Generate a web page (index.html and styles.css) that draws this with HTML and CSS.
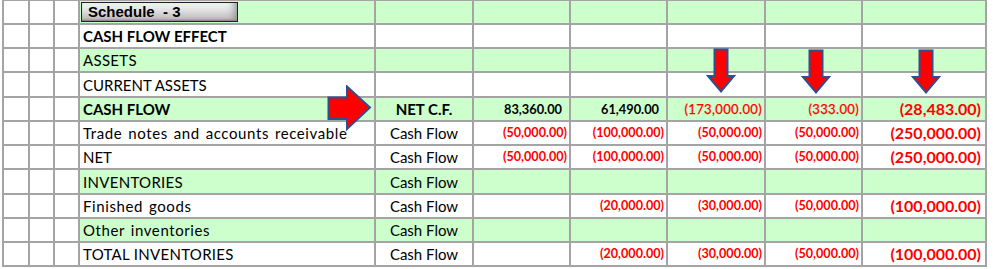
FILE: index.html
```html
<!DOCTYPE html>
<html>
<head>
<meta charset="utf-8">
<link rel="stylesheet" href="styles.css">
</head>
<body>
<div class="sheet">
  <div class="grid">
    <div class="row green">
      <div class="c"></div><div class="c"></div><div class="c"></div>
      <div class="c lbl"><span class="btn">Schedule&nbsp; - 3</span></div>
      <div class="c"></div><div class="c"></div><div class="c"></div><div class="c"></div><div class="c"></div><div class="c"></div>
    </div>
    <div class="row">
      <div class="c"></div><div class="c"></div><div class="c"></div>
      <div class="c lbl b">CASH FLOW EFFECT</div>
      <div class="c"></div><div class="c"></div><div class="c"></div><div class="c"></div><div class="c"></div><div class="c"></div>
    </div>
    <div class="row green">
      <div class="c"></div><div class="c"></div><div class="c"></div>
      <div class="c lbl caps">ASSETS</div>
      <div class="c"></div><div class="c"></div><div class="c"></div><div class="c"></div><div class="c"></div><div class="c"></div>
    </div>
    <div class="row">
      <div class="c"></div><div class="c"></div><div class="c"></div>
      <div class="c lbl">CURRENT ASSETS</div>
      <div class="c"></div><div class="c"></div><div class="c"></div><div class="c"></div><div class="c"></div><div class="c"></div>
    </div>
    <div class="row green">
      <div class="c"></div><div class="c"></div><div class="c"></div>
      <div class="c lbl b">CASH FLOW</div>
      <div class="c mid b">NET C.F.</div>
      <div class="c num pos">83,360.00</div>
      <div class="c num pos">61,490.00</div>
      <div class="c num neg thin">(173,000.00)</div>
      <div class="c num neg thin">(333.00)</div>
      <div class="c num big">(28,483.00)</div>
    </div>
    <div class="row">
      <div class="c"></div><div class="c"></div><div class="c"></div>
      <div class="c lbl lower">Trade notes and accounts receivable</div>
      <div class="c mid">Cash Flow</div>
      <div class="c num neg">(50,000.00)</div>
      <div class="c num neg">(100,000.00)</div>
      <div class="c num neg">(50,000.00)</div>
      <div class="c num neg">(50,000.00)</div>
      <div class="c num big">(250,000.00)</div>
    </div>
    <div class="row">
      <div class="c"></div><div class="c"></div><div class="c"></div>
      <div class="c lbl">NET</div>
      <div class="c mid">Cash Flow</div>
      <div class="c num neg">(50,000.00)</div>
      <div class="c num neg">(100,000.00)</div>
      <div class="c num neg">(50,000.00)</div>
      <div class="c num neg">(50,000.00)</div>
      <div class="c num big">(250,000.00)</div>
    </div>
    <div class="row green">
      <div class="c"></div><div class="c"></div><div class="c"></div>
      <div class="c lbl caps">INVENTORIES</div>
      <div class="c mid">Cash Flow</div>
      <div class="c"></div><div class="c"></div><div class="c"></div><div class="c"></div><div class="c"></div>
    </div>
    <div class="row">
      <div class="c"></div><div class="c"></div><div class="c"></div>
      <div class="c lbl lower">Finished goods</div>
      <div class="c mid">Cash Flow</div>
      <div class="c"></div>
      <div class="c num neg">(20,000.00)</div>
      <div class="c num neg">(30,000.00)</div>
      <div class="c num neg">(50,000.00)</div>
      <div class="c num big">(100,000.00)</div>
    </div>
    <div class="row green">
      <div class="c"></div><div class="c"></div><div class="c"></div>
      <div class="c lbl lower">Other inventories</div>
      <div class="c mid">Cash Flow</div>
      <div class="c"></div><div class="c"></div><div class="c"></div><div class="c"></div><div class="c"></div>
    </div>
    <div class="row">
      <div class="c"></div><div class="c"></div><div class="c"></div>
      <div class="c lbl caps">TOTAL INVENTORIES</div>
      <div class="c mid">Cash Flow</div>
      <div class="c"></div>
      <div class="c num neg">(20,000.00)</div>
      <div class="c num neg">(30,000.00)</div>
      <div class="c num neg">(50,000.00)</div>
      <div class="c num big">(100,000.00)</div>
    </div>
  </div>

  <svg class="arrow arrow-right" width="46" height="46" viewBox="0 0 46 46">
    <path d="M1.5 12.5 H20 V1.5 L43 22.5 L20 44 V34 H1.5 Z" fill="#ff0000" stroke="#2f4f8f" stroke-width="2" stroke-linejoin="miter"/>
  </svg>
  <svg class="arrow arrow-d1" width="30" height="46" viewBox="0 0 30 46">
    <path d="M8.5 1.5 H21.5 V28 H28 L15 43.5 L2 28 H8.5 Z" fill="#ff0000" stroke="#2f4f8f" stroke-width="2"/>
  </svg>
  <svg class="arrow arrow-d2" width="30" height="46" viewBox="0 0 30 46">
    <path d="M8.5 1.5 H21.5 V28 H28 L15 43.5 L2 28 H8.5 Z" fill="#ff0000" stroke="#2f4f8f" stroke-width="2"/>
  </svg>
  <svg class="arrow arrow-d3" width="30" height="46" viewBox="0 0 30 46">
    <path d="M8.5 1.5 H21.5 V28 H28 L15 43.5 L2 28 H8.5 Z" fill="#ff0000" stroke="#2f4f8f" stroke-width="2"/>
  </svg>
</div>
</body>
</html>
```

FILE: styles.css
```css
html, body {
  margin: 0;
  padding: 0;
  background: #ffffff;
}

.sheet {
  position: relative;
  width: 993px;
  height: 269px;
  overflow: hidden;
}

.grid {
  display: grid;
  grid-template-columns: 24px 23px 23px 294px 96px 95px 95px 96px 95px 122px;
  grid-template-rows: 22px 22px 22px 23px 22px 22px 22px 23px 22px 22px 22px;
  gap: 2px;
  padding: 1px 2px 2px 2px;
  margin-left: 2px;
  width: max-content;
  background: #a4a4a4;
  font-family: Lato, "Noto Sans", sans-serif;
  color: #000000;
}

.row {
  display: contents;
}

.c {
  background: #ffffff;
  display: flex;
  align-items: flex-end;
  padding: 0 3px 2px 3px;
  white-space: nowrap;
  font-size: 15px;
  line-height: 18px;
  min-width: 0;
}

.row.green > .c:nth-child(n+4) {
  background: #ccffcc;
}

.lbl {
  justify-content: flex-start;
}

.lower {
  letter-spacing: 0.6px;
  word-spacing: 1.5px;
}

.caps {
  letter-spacing: 0.3px;
}

.b {
  font-weight: bold;
}

.mid {
  justify-content: center;
}

.num {
  justify-content: flex-end;
  font-size: 12.6px;
  font-weight: bold;
  padding-right: 2px;
  padding-bottom: 2px;
}

.pos {
  color: #000000;
  font-size: 12.8px;
  padding-right: 7px;
}

.neg {
  color: #ff0000;
}

.thin {
  font-weight: normal;
  font-size: 13px;
  letter-spacing: 0.35px;
  -webkit-text-stroke: 0.25px #ff0000;
}

.big {
  color: #ff0000;
  font-size: 16px;
  padding-bottom: 2px;
  padding-right: 4px;
}

.btn {
  display: inline-block;
  align-self: center;
  margin-left: -2px;
  margin-top: 1px;
  width: 149px;
  height: 18px;
  padding-left: 6px;
  border: 1px solid #222222;
  background: linear-gradient(to bottom, #f6f6f6 0%, #dedede 45%, #b4b4b4 100%);
  box-shadow: inset -8px 0 8px -6px #8a8a8a, inset 0 -2px 2px -1px #7a7a7a;
  font-family: "Liberation Sans", Arial, sans-serif;
  font-weight: bold;
  font-size: 15px;
  line-height: 18px;
  color: #000000;
}

.arrow {
  position: absolute;
}

.arrow-right {
  left: 327px;
  top: 85px;
}

.arrow-d1 {
  left: 706px;
  top: 48px;
}

.arrow-d2 {
  left: 801px;
  top: 49px;
}

.arrow-d3 {
  left: 911px;
  top: 49px;
}
```
